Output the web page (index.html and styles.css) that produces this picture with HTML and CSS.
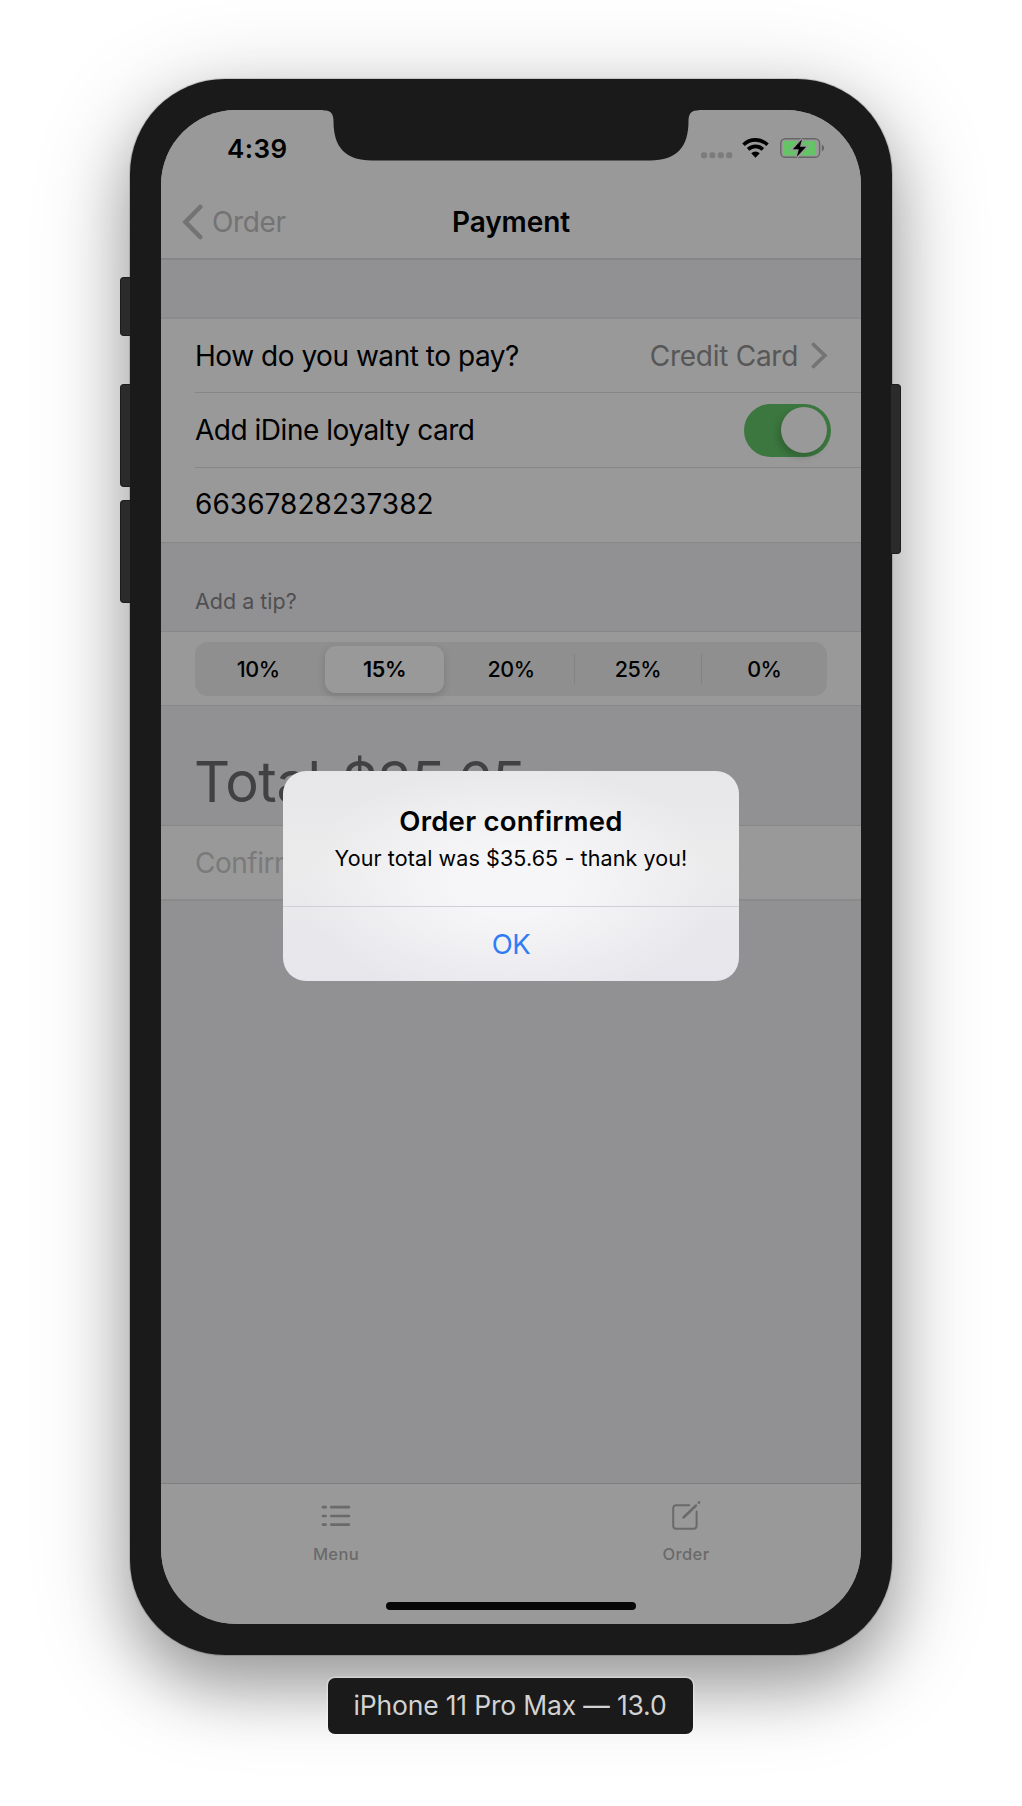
FILE: index.html
```
<!DOCTYPE html>
<html lang="en">
<head>
<meta charset="utf-8">
<title>Payment</title>
<link rel="stylesheet" href="styles.css">
</head>
<body>
<main class="stage">
  <div class="device">
    <span class="key key-mute"></span>
    <span class="key key-up"></span>
    <span class="key key-down"></span>
    <span class="key key-power"></span>
    <div class="screen">
      <svg class="notch" width="376" height="52" viewBox="0 0 376 52"><path d="M0 0V.3C7 .3 10.500 3 10.500 11C10.500 37 22 50.500 49 50.500H327C354 50.500 365.500 37 365.500 11C365.500 3 369 .3 376 .3V0Z" fill="#1a1a1a"/></svg>
      <header class="top">
        <div class="status">
          <span class="time">4:39</span>
          <span class="signals">
            <svg width="32" height="7" viewBox="0 0 32 7" fill="#7c7c7c"><rect width="6" height="6" y=".3" rx="2"/><rect width="6" height="6" x="8.400" y=".3" rx="2"/><rect width="6" height="6" x="16.800" y=".3" rx="2"/><rect width="6" height="6" x="25.200" y=".3" rx="2"/></svg>
            <svg class="wifi" width="27" height="20" viewBox="0 0 27 20"><g fill="none" stroke="#000" stroke-width="3.600"><path d="M1.500 6.800a17 17 0 0 1 24 0"/><path d="M6.100 11.400a10.500 10.500 0 0 1 14.800 0"/></g><path d="M9.200 15.200a6.200 6.200 0 0 1 8.600 0L13.500 19.700Z"/></svg>
            <svg class="battery" width="45" height="22" viewBox="0 0 45 22"><rect x=".8" y="1.700" width="38.800" height="18.600" rx="4.600" fill="none" stroke="#666" stroke-width="1.400"/><rect x="3" y="4" width="32.500" height="14.500" rx="2.400" fill="#65c466"/><path d="M41.800 7.500c3 1.500 3 5.500 0 7Z" fill="#666"/><path d="M22 2.200L12.800 12.200h6L16.800 19.700L26.200 9.700h-6.200Z" fill="#000" stroke="#999" stroke-width="3" paint-order="stroke"/></svg>
          </span>
        </div>
        <nav class="navbar">
          <a class="back"><svg width="22" height="36" viewBox="0 0 22 36"><path d="M18.200 3L3.500 18L18.200 33" fill="none" stroke="#737373" stroke-width="4.600" stroke-linecap="round" stroke-linejoin="miter"/></svg><span>Order</span></a>
          <h1>Payment</h1>
        </nav>
      </header>

      <section class="group">
        <div class="row"><span class="pay">How do you want to pay?</span><span class="value">Credit Card</span><svg width="17" height="27" viewBox="0 0 17 27"><path d="M2.500 2.500L13.800 13.500L2.500 24.500" fill="none" stroke="#747476" stroke-width="3.800" stroke-linecap="round"/></svg></div>
        <div class="row"><span class="loyalty">Add iDine loyalty card</span><span class="switch"><i></i></span></div>
        <div class="row"><span>66367828237382</span></div>
      </section>

      <h2 class="tip-label">Add a tip?</h2>
      <section class="tip">
        <div class="segments">
          <span>10%</span><span class="on">15%</span><span>20%</span><span>25%</span><span>0%</span>
        </div>
      </section>

      <h2 class="total">Total: $35.65</h2>
      <section class="confirm">Confirm order</section>

      <footer class="tabs">
        <a class="tab tab-menu"><svg width="30" height="30" viewBox="0 0 30 30" fill="none" stroke="#6a6a6a" stroke-width="2.700" stroke-linecap="round"><path d="M2 6.200h2.600M10.300 6.200h17.600M2 15h2.600M10.300 15h17.600M2 23.600h2.600M10.300 23.600h17.600"/></svg><span>Menu</span></a>
        <a class="tab tab-order"><svg width="30" height="30" viewBox="0 0 30 30" fill="none" stroke="#6a6a6a" stroke-width="2" stroke-linecap="round"><path d="M18.300 4.200H5.300Q2.200 4.200 2.200 7.300V24.500Q2.200 27.700 5.300 27.700H22.500Q25.600 27.700 25.600 24.500V10.500"/><path d="M25 4.500L12.500 16.500" stroke-width="2.500"/><path d="M27.800 1.700l.2-.2" stroke-width="2.600"/></svg><span>Order</span></a>
        <span class="home"></span>
      </footer>

      <div class="alert">
        <div class="message">
          <h3>Order confirmed</h3>
          <p>Your total was $35.65 - thank you!</p>
        </div>
        <button class="ok">OK</button>
      </div>
    </div>
  </div>
  <div class="caption">iPhone 11 Pro Max — 13.0</div>
</main>
</body>
</html>
```
FILE: styles.css
```
* { box-sizing: border-box; }
body { margin: 0; background: #fff; font-family: Inter, "Liberation Sans", sans-serif; font-size: 28px; color: #000; }
h1, h2, h3, p { margin: 0; font-weight: 400; }
svg { display: block; flex: none; }
span { white-space: nowrap; }

.stage { height: 1806px; padding-top: 79px; display: flex; flex-direction: column; align-items: center; overflow: hidden; }

.device {
  position: relative; flex: none; width: 762px; height: 1576px; padding: 31px;
  background: #1a1a1a; border-radius: 95px;
  box-shadow: 0 0 0 1px rgba(0, 0, 0, .14), 0 32px 60px rgba(0, 0, 0, .26), 0 20px 100px rgba(0, 0, 0, .24);
}
.key { position: absolute; left: -10px; width: 10px; background: #2b2b2b; border: 1px solid #1c1c1c; border-right: 0; border-radius: 4px 0 0 4px; }
.key-mute { top: 198px; height: 59px; }
.key-up { top: 305px; height: 103px; }
.key-down { top: 421px; height: 103px; }
.key-power { top: 305px; left: 761px; width: 10px; height: 170px; border: 1px solid #1c1c1c; border-left: 0; border-radius: 0 4px 4px 0; }

.screen { position: relative; height: 1514px; display: flex; flex-direction: column; background: #919193; border-radius: 75px; overflow: hidden; }
.notch { position: absolute; top: 0; left: 162px; }

.top { height: 150px; background: #999; border-bottom: 2px solid #858587; }
.status { height: 75px; display: flex; justify-content: space-between; padding: 22px 36px 0 66px; }
.time { font-size: 26px; line-height: 33px; font-weight: 600; letter-spacing: .42px; }
.signals { display: flex; align-items: flex-start; padding-top: 4px; }
.signals svg:first-child { margin: 15.500px 9.500px 0 0; }
.signals .wifi { margin: 1.500px 11px 0 0; }
.signals .battery { margin-top: 1px; }

.navbar { height: 73px; display: grid; grid-template-columns: 1fr auto 1fr; align-items: center; padding: 1px 0 0 21px; line-height: 36px; }
.back { display: flex; align-items: center; gap: 8px; color: #737373; letter-spacing: -.36px; }
.navbar h1 { font-size: 28px; font-weight: 600; letter-spacing: -.13px; margin-left: -21px; }

.group { margin-top: 57px; height: 226px; border-top: 2px solid #8b8b8c; border-bottom: 1px solid #878788; background: #999; }
.row { height: 75px; margin-left: 34px; padding-right: 30px; display: flex; align-items: center; border-bottom: 1px solid #878788; }
.row:first-child { height: 74px; padding-right: 33px; }
.row:last-child { height: 74px; padding-bottom: 3px; border-bottom: 0; letter-spacing: .05px; }
.row span:first-child { flex: 1; }
.pay { letter-spacing: -.47px; }
.loyalty { letter-spacing: -.48px; }
.value { color: #575758; letter-spacing: -.28px; margin-right: 13px; }
.switch { width: 87px; height: 53px; border-radius: 27px; background: #3c773f; padding: 3.500px 4px; display: flex; justify-content: flex-end; }
.switch i { width: 46px; height: 46px; border-radius: 50%; background: #999; box-shadow: -3px 4px 7px rgba(0, 0, 0, .18); }

.tip-label { height: 88px; padding: 45px 0 0 34px; font-size: 21.500px; line-height: 27px; color: #4f4f51; }
.tip { height: 75px; padding: 10px 34px 0; background: #999; border-top: 1px solid #878788; border-bottom: 1px solid #878788; }
.segments { height: 54px; display: grid; grid-template-columns: repeat(5, 1fr); align-items: center; background: #8f8f8f; border-radius: 13px; font-size: 21.500px; font-weight: 500; letter-spacing: -.5px; text-align: center; }
.segments span { height: 30px; line-height: 31px; }
.segments span:nth-child(n + 4) { border-left: 1px solid #828282; }
.segments .on { height: 47px; line-height: 47px; margin: 0 4px; background: #999; border-radius: 11px; font-weight: 600; letter-spacing: -.31px; box-shadow: 0 3px 8px rgba(0, 0, 0, .14); }

.total { height: 119px; padding: 41px 0 0 33px; font-size: 56px; line-height: 70px; letter-spacing: -.5px; word-spacing: -9.500px; color: #414143; }
.confirm { height: 76px; padding-left: 34px; line-height: 74px; color: #7a7a7b; letter-spacing: -.5px; background: #999; border-top: 1px solid #878788; border-bottom: 2px solid #8a8a8b; }

.tabs { position: relative; margin-top: auto; height: 141px; display: grid; grid-template-columns: 1fr 1fr; background: #999; border-top: 1px solid #7e7e7e; }
.tab { display: flex; flex-direction: column; align-items: center; padding-top: 17px; gap: 13px; font-size: 16.500px; font-weight: 500; line-height: 20px; color: #6a6a6a; letter-spacing: .4px; }
.home { position: absolute; left: 225px; bottom: 14px; width: 250px; height: 8.500px; border-radius: 5px; background: #070707; }

.alert {
  position: absolute; left: 122px; top: 661px; width: 456px; height: 210px; border-radius: 23px; overflow: hidden; text-align: center;
  background: radial-gradient(ellipse 210px 120px at 50% 54%, #f6f6f8 25%, rgba(246, 246, 248, 0) 100%), linear-gradient(#e7e7e9, #ebebec 45%, #e6e6ec);
}
.message { height: 136px; padding-top: 32px; border-bottom: 1px solid #d0d0d4; }
.message h3 { font-size: 27.500px; line-height: 36px; font-weight: 600; letter-spacing: .25px; }
.message p { font-size: 21.500px; line-height: 28px; margin-top: 5px; letter-spacing: .1px; white-space: nowrap; }
.ok { display: block; width: 100%; height: 74px; border: 0; padding: 0 0 1px; background: none; font: 400 27.500px/72px Inter, "Liberation Sans", sans-serif; letter-spacing: -.5px; color: #2f7cf6; }

.caption { position: relative; right: 1px; flex: none; width: 365px; height: 56px; margin-top: 23px; line-height: 55px; text-align: center; background: #1a1a1a; border-radius: 7px; font-size: 26.500px; letter-spacing: -.18px; color: #d2d2d2; box-shadow: 0 0 0 1.500px rgba(255, 255, 255, .3); }
```
